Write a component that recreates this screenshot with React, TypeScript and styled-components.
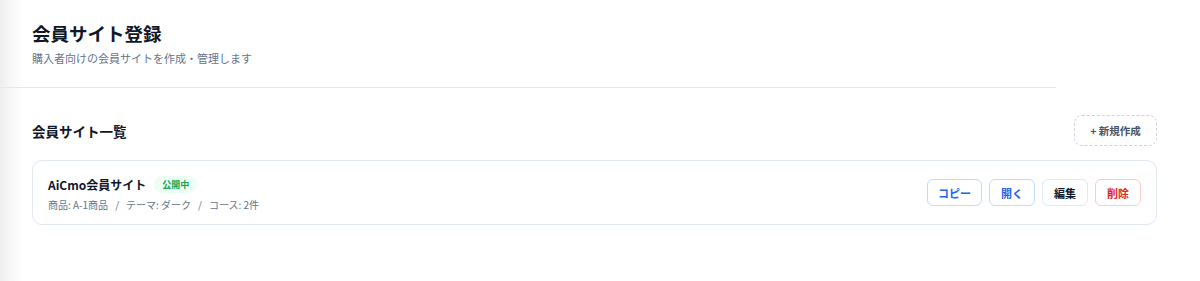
import React from "react";
import styled, { createGlobalStyle } from "styled-components";

const Global = createGlobalStyle`
  html, body { margin: 0; padding: 0; }
  body {
    font-family: "Noto Sans CJK JP", "Noto Sans", sans-serif;
    background: linear-gradient(to right, #eeeeee 0px, #f7f7f7 10px, #ffffff 24px);
    color: #0f172a;
    min-height: 281px;
  }
`;

const Page = styled.div`
  display: flex;
  flex-direction: column;
`;

const Header = styled.header`
  width: 1056px;
  box-sizing: border-box;
  padding: 18px 32px 21px;
  border-bottom: 1px solid #e2e8f0;
  display: flex;
  flex-direction: column;
  gap: 2px;
`;

const Title = styled.h1`
  margin: 0;
  font-size: 18.5px;
  line-height: 30px;
  font-weight: 700;
  color: #0f172a;
`;

const Subtitle = styled.p`
  margin: 0;
  font-size: 11px;
  line-height: 16px;
  color: #64748b;
`;

const Main = styled.main`
  padding: 27px 43px 0 32px;
  display: flex;
  flex-direction: column;
  gap: 14px;
`;

const SectionHead = styled.div`
  display: flex;
  align-items: center;
  justify-content: space-between;
`;

const SectionTitle = styled.h2`
  margin: 0;
  font-size: 13.5px;
  font-weight: 700;
  color: #0f172a;
`;

const NewButton = styled.button`
  font-family: inherit;
  width: 83px;
  height: 31px;
  border: 1.5px dashed #cbd5e1;
  border-radius: 8px;
  background: #fff;
  font-size: 10.5px;
  font-weight: 700;
  color: #475569;
  display: flex;
  align-items: center;
  justify-content: center;
  padding: 0;
`;

const Card = styled.div`
  height: 65px;
  box-sizing: border-box;
  border: 1px solid #e2e8f0;
  border-radius: 10px;
  background: #fff;
  padding: 0 15px;
  display: flex;
  align-items: center;
  justify-content: space-between;
`;

const Info = styled.div`
  display: flex;
  flex-direction: column;
  gap: 4px;
  padding-top: 2px;
`;

const NameRow = styled.div`
  display: flex;
  align-items: center;
  gap: 8px;
`;

const Name = styled.span`
  font-size: 12px;
  font-weight: 700;
  color: #0f172a;
`;

const Badge = styled.span`
  background: #ecfdf3;
  color: #16a34a;
  font-size: 9px;
  font-weight: 700;
  border-radius: 9px;
  padding: 0 8px;
  height: 17px;
  display: inline-flex;
  align-items: center;
`;

const Meta = styled.div`
  font-size: 10px;
  color: #64748b;
  display: flex;
  gap: 7px;
`;

const Actions = styled.div`
  display: flex;
  gap: 7px;
`;

const tones = {
  blue: { border: "#bfdbfe", color: "#2563eb" },
  plain: { border: "#e2e8f0", color: "#0f172a" },
  red: { border: "#fecaca", color: "#dc2626" },
};

const ActionButton = styled.button<{ $tone: keyof typeof tones; $w: number }>`
  font-family: inherit;
  width: ${(p) => p.$w}px;
  height: 27px;
  padding: 0;
  border-radius: 6px;
  background: #fff;
  border: 1px solid ${(p) => tones[p.$tone].border};
  color: ${(p) => tones[p.$tone].color};
  font-size: 11px;
  font-weight: 700;
  display: flex;
  align-items: center;
  justify-content: center;
`;

export default function App() {
  return (
    <Page>
      <Global />
      <Header>
        <Title>会員サイト登録</Title>
        <Subtitle>購入者向けの会員サイトを作成・管理します</Subtitle>
      </Header>
      <Main>
        <SectionHead>
          <SectionTitle>会員サイト一覧</SectionTitle>
          <NewButton>+ 新規作成</NewButton>
        </SectionHead>
        <Card>
          <Info>
            <NameRow>
              <Name>AiCmo会員サイト</Name>
              <Badge>公開中</Badge>
            </NameRow>
            <Meta>
              <span>商品: A-1商品</span>
              <span>/</span>
              <span>テーマ: ダーク</span>
              <span>/</span>
              <span>コース: 2件</span>
            </Meta>
          </Info>
          <Actions>
            <ActionButton $tone="blue" $w={55}>コピー</ActionButton>
            <ActionButton $tone="blue" $w={46}>開く</ActionButton>
            <ActionButton $tone="plain" $w={46}>編集</ActionButton>
            <ActionButton $tone="red" $w={46}>削除</ActionButton>
          </Actions>
        </Card>
      </Main>
    </Page>
  );
}
